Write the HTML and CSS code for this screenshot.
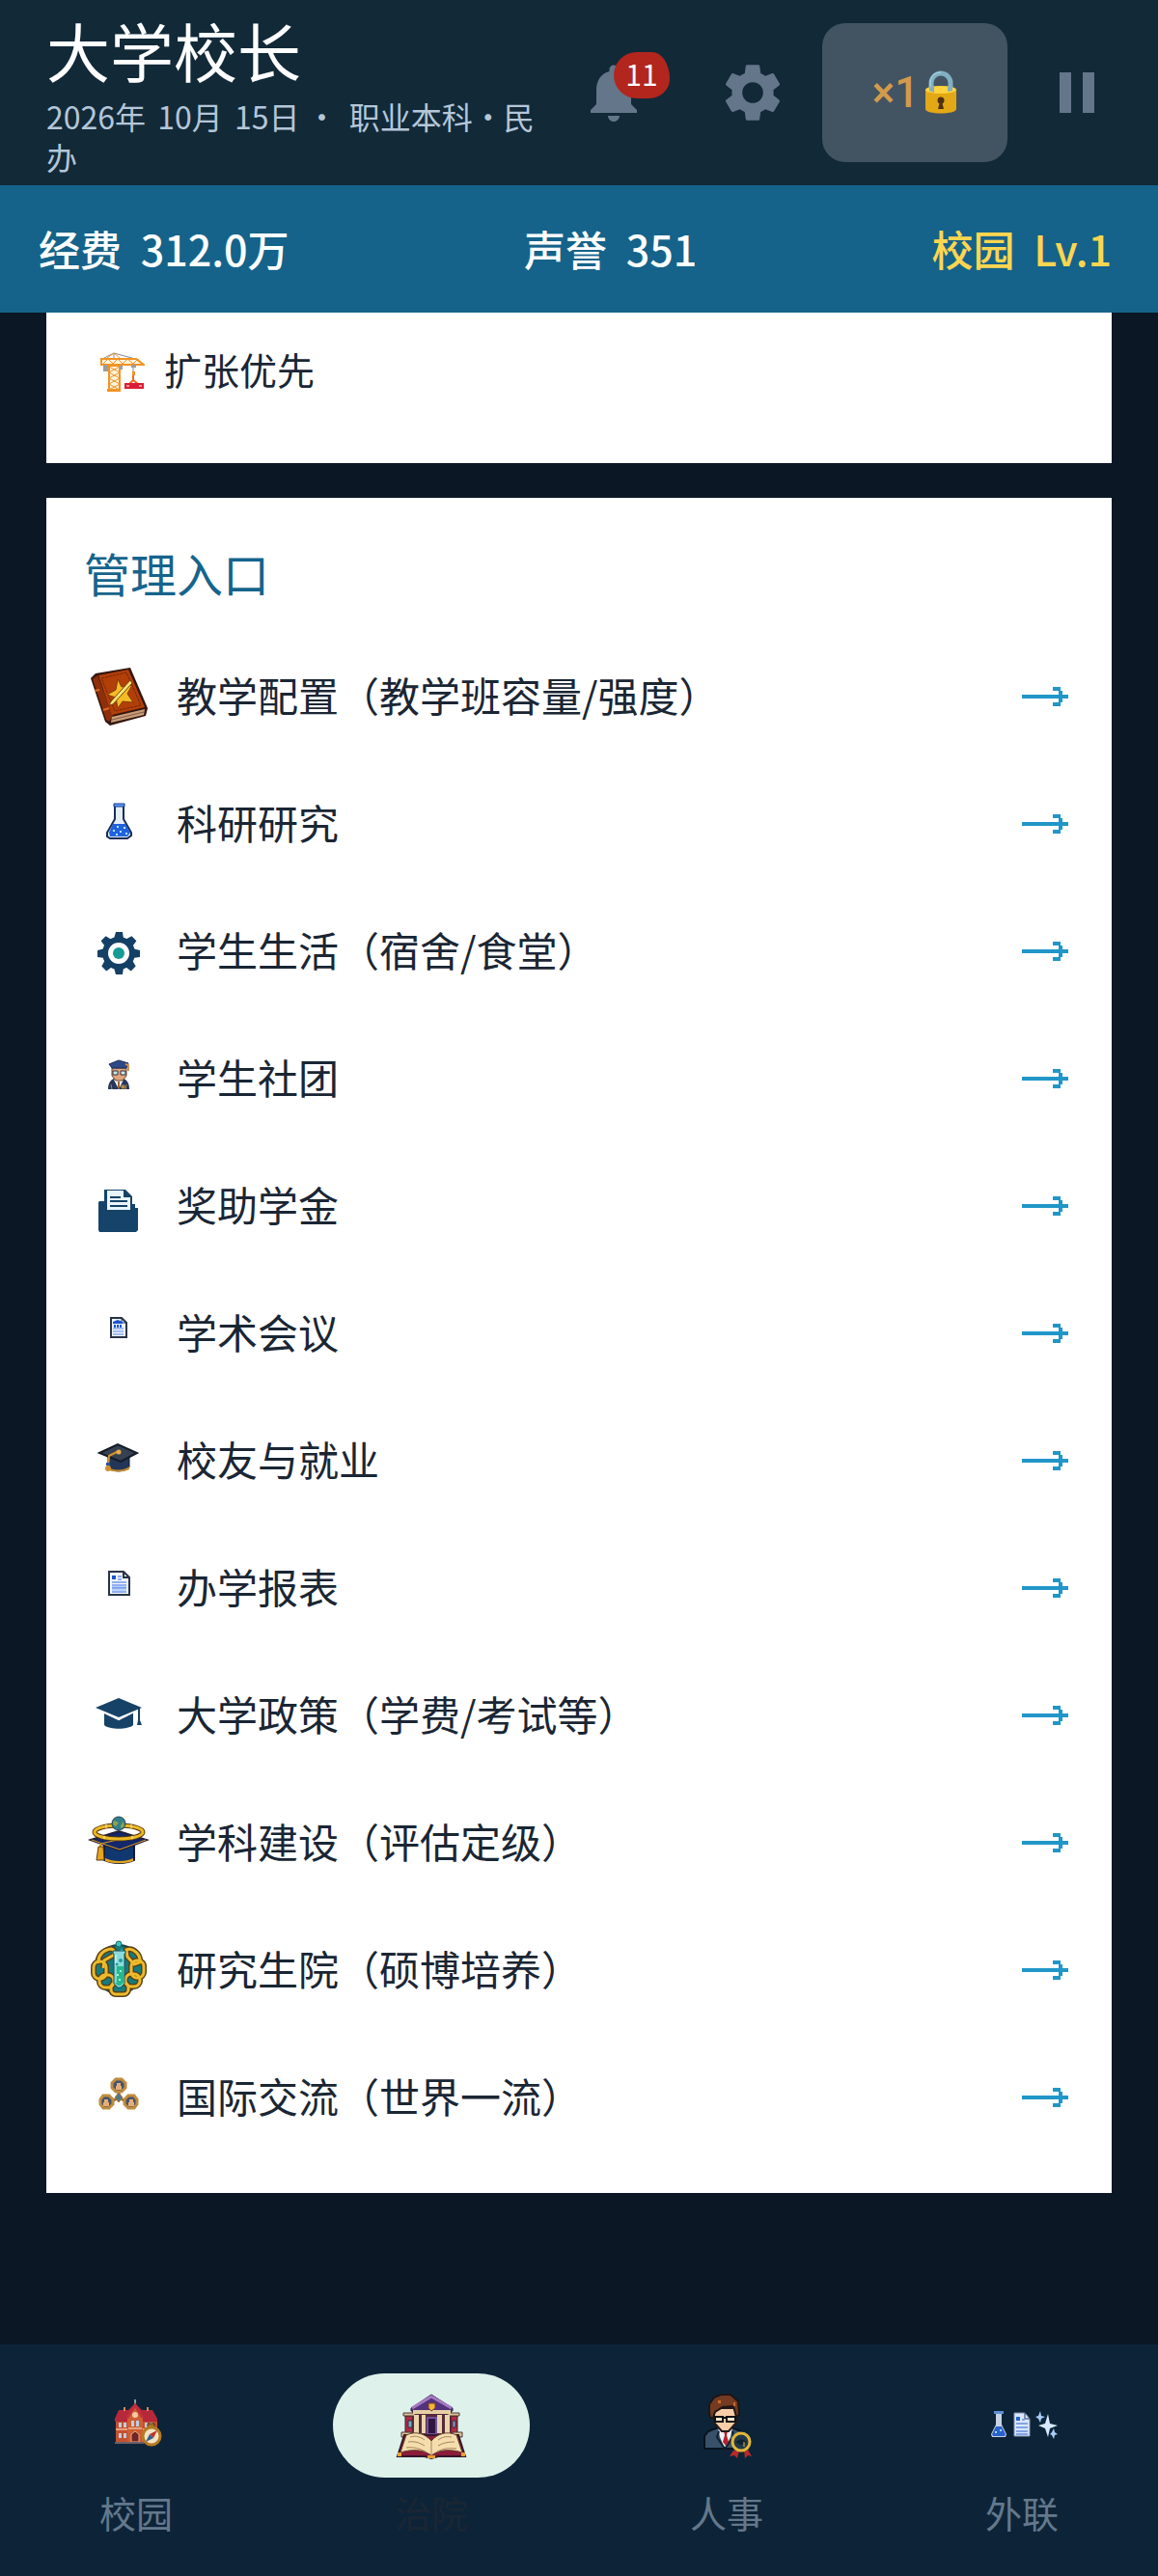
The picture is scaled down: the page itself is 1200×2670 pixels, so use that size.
FILE: index.html
```
<!doctype html>
<html lang="zh-CN">

<head>
    <meta charset="utf-8" />
    <meta name="viewport" content="width=device-width, initial-scale=1.0">
    <title>大学校长</title>
    <link rel="stylesheet" href="styles.css">
</head>

<body>

    <svg width="0" height="0" class="defs">
        <symbol id="arrow" viewBox="0 0 48 20"><path d="M0 8h38V4h-6V0h8v4h2v4h6v4h-6v4h-2v4h-8v-4h6v-4H0z" /></symbol>
    </svg>

    <header class="header">
        <div class="info">
            <h1 class="title">大学校长</h1>
            <div class="date">2026年 <span class="part">10月</span> <span class="part">15日</span> · <span class="part">职业本科</span>·民办</div>
        </div>
        <button class="icon-btn" aria-label="通知">
            <svg class="icon" viewBox="0 0 24 24"><path d="M12 22c1.100 0 2-.9 2-2h-4c0 1.100.9 2 2 2zm6-6v-5c0-3.070-1.640-5.640-4.500-6.320V4c0-.830-.670-1.500-1.500-1.500s-1.500.670-1.500 1.500v.680C7.630 5.360 6 7.920 6 11v5l-2 2v1h16v-1l-2-2z" /></svg>
            <span class="badge">11</span>
        </button>
        <button class="icon-btn" aria-label="设置">
            <svg class="icon" viewBox="0 0 24 24"><path d="M19.140 12.940c.040-.300.060-.610.060-.940 0-.320-.020-.640-.070-.940l2.030-1.580c.180-.140.230-.410.120-.610l-1.920-3.320c-.120-.220-.370-.290-.590-.220l-2.390.960c-.500-.380-1.030-.700-1.620-.940l-.360-2.540c-.040-.240-.240-.410-.480-.410h-3.840c-.240 0-.430.170-.470.410l-.360 2.540c-.590.240-1.130.570-1.620.940l-2.390-.960c-.220-.080-.470 0-.590.220L2.740 8.870c-.120.210-.080.470.120.610l2.030 1.580c-.050.300-.090.630-.090.940s.020.640.070.940l-2.030 1.580c-.180.140-.230.410-.120.610l1.920 3.320c.120.220.370.290.590.220l2.390-.960c.500.380 1.030.700 1.620.940l.360 2.540c.050.240.240.410.480.410h3.840c.240 0 .440-.170.470-.410l.360-2.540c.590-.240 1.130-.560 1.620-.940l2.390.960c.220.080.470 0 .590-.220l1.920-3.320c.120-.220.070-.470-.120-.610l-2.010-1.580zM12 15.600a3.600 3.600 0 1 1 0-7.200 3.600 3.600 0 0 1 0 7.200z" /></svg>
        </button>
        <button class="speed-btn">
            <span>×1</span>
            <svg class="lock" viewBox="0 0 34 46">
                <path d="M7 22V13a10 10 0 0 1 20 0v9" fill="none" stroke="#82afc2" stroke-width="5" />
                <path d="M6 20v-8C7 5 12 2 17 2" fill="none" stroke="#b7dce8" stroke-width="1" />
                <path d="M1 20v20c0 6 32 6 32 0V20z" fill="#e3a815" />
                <ellipse cx="17" cy="20" rx="16" ry="4" fill="#ffd43c" />
                <path d="M5 21v-4h5v6M24 22v-5h5v4" fill="#82afc2" />
                <circle cx="17" cy="31" r="3.500" fill="#4d3212" /><path d="M16 32h2l2 8h-6z" fill="#4d3212" />
            </svg>
        </button>
        <button class="icon-btn" aria-label="暂停">
            <svg class="icon" viewBox="0 0 24 24"><path d="M6 5h4v14H6zM14 5h4v14h-4z" /></svg>
        </button>
    </header>

    <div class="stats">
        <div>经费 <span class="part">312.0万</span></div>
        <div>声誉 <span class="part">351</span></div>
        <div class="level">校园 <span class="part">Lv.1</span></div>
    </div>

    <main class="main">

        <section class="card strategy">
            <a class="tag" href="#">
                <svg class="crane" viewBox="0 0 46 42">
                    <path d="M2 7L14 1l26 7M14 1v5M34 12v8" fill="none" stroke="#858b90" stroke-width="1" />
                    <path d="M1 7h36l8 6H1zM9 14h11v25H9z" fill="#fff4df" stroke="#f29423" stroke-width="2" />
                    <path d="M3 12l5-5 5 5 5-5 5 5 5-5 6 5 4-4M9 15l11 6-11 6 11 6-11 6M20 15L9 21l11 6-11 6 11 6M7 6l7-5 6 5" fill="none" stroke="#f29423" stroke-width="1" />
                    <path d="M3 13h5v7H3zM32 13h5v3h-5zM20 14h3v4h-3z" fill="#9a9c9f" />
                    <path d="M7 38h14v3H7zM33 20h3v4h-3z" fill="#f29423" />
                    <path d="M34 24v5m0 0l-4 4m4-4l5 4" fill="none" stroke="#f06a24" stroke-width="2" />
                    <path d="M25 32h20v6H25z" fill="#d91e38" /><path d="M27 34h3v2h-3zM40 34h3v2h-3z" fill="#ff8fa0" />
                </svg>
                <span>扩张优先</span>
            </a>
        </section>

        <section class="card">
            <h2 class="card-title">管理入口</h2>
            <ul class="menu">
                <li><a class="row" href="#">
                    <svg class="row-icon" viewBox="0 0 60 60">
                        <path d="M1 11l5-5L42 0l18 42-2 8-37 10-5-4z" fill="#35160f" />
                        <path d="M3 12l5-4 16 42-4 6-3-2z" fill="#8e2f0b" />
                        <path d="M9 8l31-6 17 39-34 8z" fill="#b23f08" />
                        <path d="M23 51l34-8-1 6-34 8z" fill="#c89c78" /><path d="M23 54l33-8" stroke="#805b46" />
                        <path d="M12 11l26-6 15 34-27 6z" fill="none" stroke="#722608" stroke-dasharray="3 1" />
                        <path d="M5 24l5-1M14 44l6-2" stroke="#df6a20" stroke-width="2" />
                        <path d="M29 12l4 8 11-2-5 9 6 9-11-1-5 7-2-11-9-3 9-5z" fill="#f4bb25" stroke="#803d0a" />
                        <path d="M22 35L42 13l2 3-20 22-4 1z" fill="#ffe375" stroke="#724010" />
                    </svg>
                    <span class="label">教学配置（教学班容量/强度）</span>
                    <svg class="arrow"><use href="#arrow" /></svg>
                </a></li>
                <li><a class="row" href="#">
                    <svg class="row-icon" viewBox="0 0 60 60">
                        <path d="M26 11v14l-8 14v4l3 2h18l4-3v-3l-8-14V11z" fill="#e4edf8" stroke="#182d55" stroke-width="2" />
                        <path d="M25 9h11v3H25z" fill="#5b9cf4" stroke="#153a91" />
                        <path d="M24 30h13l5 9-3 4H21l-1-4z" fill="#1f62de" />
                        <path d="M24 36h2v2h-2zM28 32h2v2h-2zM31 37h2v2h-2zM35 33h2v2h-2zM27 40h2v2h-2zM37 39h2v2h-2z" fill="#b9e4ff" />
                    </svg>
                    <span class="label">科研研究</span>
                    <svg class="arrow"><use href="#arrow" /></svg>
                </a></li>
                <li><a class="row" href="#">
                    <svg class="row-icon" viewBox="0 0 60 60">
                        <g fill="#154066">
                            <circle cx="30" cy="32" r="17" />
                            <path d="M27 10h7l1 7-5 3-5-3zM27 54h7l1-7-5-3-5 3zM8 29v7l8 1 3-5-3-5zM52 29v7l-8 1-3-5 3-5z" />
                            <path d="M27 10h7l1 7-5 3-5-3zM27 54h7l1-7-5-3-5 3zM8 29v7l8 1 3-5-3-5zM52 29v7l-8 1-3-5 3-5z" transform="rotate(45 30 32)" />
                        </g>
                        <circle cx="30" cy="32" r="11" fill="#fff" /><circle cx="30" cy="32" r="6" fill="#169b96" />
                    </svg>
                    <span class="label">学生生活（宿舍/食堂）</span>
                    <svg class="arrow"><use href="#arrow" /></svg>
                </a></li>
                <li><a class="row" href="#">
                    <svg class="row-icon" viewBox="0 0 60 60">
                        <path d="M19 41c0-8 4-12 11-12s11 4 11 12z" fill="#25385d" />
                        <path d="M25 31h10l-5 10z" fill="#fff" /><path d="M29 33h2v7h-2z" fill="#9e6430" />
                        <path d="M23 41l-1-5M37 41l1-5M33 37h3v3h-3z" stroke="#b88941" fill="#b88941" />
                        <path d="M23 19h15v8l-4 5h-7l-4-5z" fill="#e0a67c" stroke="#664232" />
                        <path d="M20 15l10-4 10 3-2 5H23z" fill="#2f4886" stroke="#182c60" />
                        <path d="M24 22h5v4h-5zM32 22h5v4h-5z" fill="#cce6ef" stroke="#303542" />
                        <path d="M37 15l3 1v6" fill="none" stroke="#c7984d" stroke-width="2" />
                    </svg>
                    <span class="label">学生社团</span>
                    <svg class="arrow"><use href="#arrow" /></svg>
                </a></li>
                <li><a class="row" href="#">
                    <svg class="row-icon" viewBox="0 0 60 60">
                        <path d="M10 25h5V13h22l7 7v8h3v4h3v23l-2 2H10l-1-2V26z" fill="#154369" />
                        <path d="M18 14h17v7h7v13H18z" fill="#e9f5fb" />
                        <path d="M21 21h11M21 25h18M21 30h18" stroke="#154369" stroke-width="2" />
                    </svg>
                    <span class="label">奖助学金</span>
                    <svg class="arrow"><use href="#arrow" /></svg>
                </a></li>
                <li><a class="row" href="#">
                    <svg class="row-icon" viewBox="0 0 60 60">
                        <path d="M22 14h11l5 5v15H22z" fill="#edf3ff" stroke="#293347" stroke-width="2" />
                        <path d="M33 14v5h5" fill="none" stroke="#293347" />
                        <path d="M24 20v-2l5-2 5 2v2zM25 21h2v3h-2zM28 21h2v3h-2zM31 21h2v3h-2z" fill="#1c55ce" />
                        <path d="M24 25h11M24 28h11M24 31h11" stroke="#5685db" />
                    </svg>
                    <span class="label">学术会议</span>
                    <svg class="arrow"><use href="#arrow" /></svg>
                </a></li>
                <li><a class="row" href="#">
                    <svg class="row-icon" viewBox="0 0 60 60">
                        <path d="M19 25v13c5 4 18 4 22-1V24z" fill="#233658" stroke="#111c2e" />
                        <path d="M20 37c6 4 17 3 21-1v3c-5 3-15 3-21 1z" fill="#c58b2e" />
                        <path d="M10 22l19-9 20 9-17 9z" fill="#374052" stroke="#131b28" stroke-width="2" />
                        <path d="M30 20l-10 5-1 12" fill="none" stroke="#d4912d" stroke-width="2" />
                        <circle cx="30" cy="21" r="2.500" fill="#e8ac44" /><path d="M17 32h4v3h-4z" fill="#21569b" /><circle cx="19" cy="38" r="3" fill="#d28d29" />
                    </svg>
                    <span class="label">校友与就业</span>
                    <svg class="arrow"><use href="#arrow" /></svg>
                </a></li>
                <li><a class="row" href="#">
                    <svg class="row-icon" viewBox="0 0 60 60">
                        <path d="M20 13h15l6 6v18H20z" fill="#f3f7ff" stroke="#293347" stroke-width="2" />
                        <path d="M35 13v6h6" fill="none" stroke="#293347" stroke-width="2" />
                        <path d="M23 28h15v2H23zM23 31h15v2H23z" fill="#bad1ff" />
                        <path d="M23 17h4v4h-4z" fill="#1c55ce" />
                        <path d="M29 18h4M29 21h4M23 24h15M23 27h15M23 30h15M23 34h15" stroke="#2d69df" />
                    </svg>
                    <span class="label">办学报表</span>
                    <svg class="arrow"><use href="#arrow" /></svg>
                </a></li>
                <li><a class="row" href="#">
                    <svg class="row-icon" viewBox="0 0 60 60">
                        <path d="M15 26l15 8 15-8v14c-5 5-25 5-30 0z" fill="#164267" />
                        <path d="M13 25l17 8 16-8" fill="none" stroke="#fff" stroke-width="4" />
                        <path d="M6 22l24-10 24 10-24 10z" fill="#164267" />
                        <path d="M51 23v14" stroke="#164267" stroke-width="2" /><path d="M50 35h2l2 5h-5z" fill="#164267" />
                    </svg>
                    <span class="label">大学政策（学费/考试等）</span>
                    <svg class="arrow"><use href="#arrow" /></svg>
                </a></li>
                <li><a class="row" href="#">
                    <svg class="row-icon" viewBox="0 0 60 60">
                        <path d="M15 31v17c7 4 24 4 31 0V31z" fill="#10376f" stroke="#121b32" stroke-width="2" />
                        <path d="M16 46c8 4 22 4 29 0v3c-8 3-21 3-29 0z" fill="#e4a51c" />
                        <path d="M1 27l29-9 29 9-28 11z" fill="#13276c" stroke="#212039" stroke-width="2" />
                        <path d="M2 27l29 10 27-10M29 27l-18 4" fill="none" stroke="#d99d25" />
                        <ellipse cx="30" cy="19" rx="25" ry="7" fill="none" stroke="#593a0b" stroke-width="5" />
                        <ellipse cx="30" cy="19" rx="25" ry="7" fill="none" stroke="#edb823" stroke-width="3" />
                        <circle cx="30" cy="10" r="7" fill="#347f8a" stroke="#284254" />
                        <path d="M25 7l5 2-3 4-3-2zM32 12l3-4 1 5-4 2z" fill="#8aa551" />
                        <path d="M17 11v4M43 11v4M15 23v3M44 23v3M25 3l-3 2M37 4l3-2" stroke="#fff0ae" />
                        <path d="M11 31v5" stroke="#d99d25" stroke-width="2" /><path d="M9 34h5l1 14H7z" fill="#e5a51f" stroke="#5c3b0e" />
                    </svg>
                    <span class="label">学科建设（评估定级）</span>
                    <svg class="arrow"><use href="#arrow" /></svg>
                </a></li>
                <li><a class="row" href="#">
                    <svg class="row-icon" viewBox="0 0 60 60">
                        <circle cx="30" cy="29" r="25" fill="#147b80" stroke="#194248" stroke-width="2" />
                        <g fill="none" stroke="#594216" stroke-width="6">
                            <path d="M9 23c-1-8 5-14 13-15 5 1 4 7 0 8l-7 4-1 8M38 9c7-3 15 5 14 13l-6 2-7-8z" />
                            <rect x="4" y="21" width="13" height="18" rx="6" /><rect x="43" y="20" width="13" height="18" rx="6" />
                            <rect x="10" y="35" width="15" height="13" rx="6" /><rect x="37" y="34" width="15" height="13" rx="6" /><rect x="22" y="43" width="18" height="12" rx="5" />
                        </g>
                        <g fill="none" stroke="#edba2c" stroke-width="3">
                            <path d="M9 23c-1-8 5-14 13-15 5 1 4 7 0 8l-7 4-1 8M38 9c7-3 15 5 14 13l-6 2-7-8z" />
                            <rect x="4" y="21" width="13" height="18" rx="6" /><rect x="43" y="20" width="13" height="18" rx="6" />
                            <rect x="10" y="35" width="15" height="13" rx="6" /><rect x="37" y="34" width="15" height="13" rx="6" /><rect x="22" y="43" width="18" height="12" rx="5" />
                        </g>
                        <path d="M24 10h13v3h-1v31l-4 4h-3l-4-4V13h-1z" fill="#8cdbdc" stroke="#164d58" />
                        <path d="M26 26h9v17l-3 3h-3l-3-3z" fill="#24b98f" /><path d="M27 14v29" stroke="#dafcff" />
                        <circle cx="30" cy="3" r="3" fill="#3bc5bc" stroke="#146a6c" /><circle cx="32" cy="20" r="2" fill="#1d9e97" /><circle cx="28" cy="24" r="1.500" fill="#1d9e97" /><circle cx="33" cy="9" r="1.500" fill="#1d9e97" />
                        <path d="M28 34h2v2h-2zM31 30h2v2h-2zM30 39h2v2h-2z" fill="#a4f6d0" />
                    </svg>
                    <span class="label">研究生院（硕博培养）</span>
                    <svg class="arrow"><use href="#arrow" /></svg>
                </a></li>
                <li><a class="row" href="#">
                    <svg class="row-icon" viewBox="0 0 60 60">
                        <path d="M30 18v12L19 36M30 30l11 6" fill="none" stroke="#9b6b31" stroke-width="3" />
                        <g fill="#45546a" stroke="#c18b3e" stroke-width="3">
                            <path d="M27 11h6l4 4v5l-4 4h-6l-4-4v-5z" /><path d="M14 28h6l4 4v5l-4 4h-6l-3-4v-5z" /><path d="M40 28h6l3 4v5l-3 4h-6l-4-4v-5z" />
                        </g>
                        <path d="M30 25l4 5-4 5-4-5z" fill="#507688" stroke="#b27a32" />
                        <path d="M28 15h4v3h1v4h-6v-4h1zM15 32h4v3h1v4h-6v-4h1zM41 32h4v3h1v4h-6v-4h1z" fill="#e5ad78" />
                    </svg>
                    <span class="label">国际交流（世界一流）</span>
                    <svg class="arrow"><use href="#arrow" /></svg>
                </a></li>
            </ul>
        </section>

    </main>

    <nav class="nav">
        <a class="nav-item" href="#">
            <span class="pill">
                <svg class="nav-icon" viewBox="0 0 72 72">
                    <path d="M15 30h43v23H15z" fill="#c3512f" />
                    <path d="M14 29l4-9h10l7-7 7 7h11l5 9v3H14z" fill="#b7283a" />
                    <path d="M35 9v9M35 11h1" stroke="#8b98a6" stroke-width="2" />
                    <path d="M27 28l8-13 8 13v25H27z" fill="#cf5e35" /><path d="M27 28l8-13 8 13" fill="none" stroke="#c2303b" stroke-width="3" />
                    <circle cx="35" cy="25" r="3" fill="#f2cb9d" />
                    <path d="M23 17h2v4h-2zM47 17h2v4h-2z" fill="#dc8265" />
                    <path d="M18 33h3v5h-3zM23 33h3v5h-3zM31 31h3v6h-3zM36 31h3v6h-3zM45 33h3v5h-3zM50 33h3v5h-3zM18 44h3v5h-3zM23 44h3v5h-3zM45 44h3v5h-3z" fill="#bfcde0" />
                    <path d="M15 40h12M43 40h13M28 39h14" stroke="#e5a17c" stroke-width="2" />
                    <path d="M31 53v-8l4-3 4 3v8z" fill="#6e2428" stroke="#efaa74" /><path d="M14 53h30v2H14z" fill="#67606a" />
                    <path d="M48 34h7v5h-7z" fill="#a57428" stroke="#573913" />
                    <circle cx="52" cy="47" r="9" fill="#f4e3c0" stroke="#b47b25" stroke-width="3" />
                    <path d="M58 41l-4 8-4-4z" fill="#bd322d" /><path d="M46 53l4-8 4 4z" fill="#315f8d" />
                </svg>
            </span>
            <span class="nav-label">校园</span>
        </a>
        <a class="nav-item active" href="#">
            <span class="pill">
                <svg class="nav-icon" viewBox="0 0 72 72">
                    <path d="M9 26h54v22H9z" fill="#b02b42" stroke="#35202e" /><path d="M16 20h41v28H16z" fill="#542a3b" />
                    <path d="M7 23h12v3H7zM53 23h12v3H53zM5 43h10v5H5zM58 43h10v5H58z" fill="#dfc398" stroke="#4a3839" />
                    <path d="M15 18L36 4l22 14v3H15z" fill="#54327d" stroke="#2b1c3c" /><path d="M16 18L36 6l21 12" fill="none" stroke="#a67ac2" stroke-width="3" />
                    <path d="M17 20h39v4H17z" fill="#e6cfa4" /><path d="M33 13h7v5l-4 3-3-3z" fill="#f3b33c" stroke="#754225" />
                    <path d="M18 25h5v19h-5zM26 25h4v19h-4zM42 25h5v19h-5zM50 25h5v19h-5z" fill="#ead4ac" />
                    <path d="M32 28h9v17h-9z" fill="#2e173d" stroke="#7350a0" stroke-width="2" />
                    <path d="M12 31h4v7h-4zM58 31h3v7h-3z" fill="#77a8cd" stroke="#402638" />
                    <path d="M8 46l-7 22h28l7 2 7-2h28l-7-22z" fill="#8b1c3a" stroke="#35182a" stroke-width="2" />
                    <path d="M10 46c10-5 20-1 26 6 6-7 16-11 26-6l6 18c-13-4-24-3-32 3-8-6-19-7-32-3z" fill="#f4deae" stroke="#6c4834" />
                    <path d="M36 52v15M14 48c6-2 11 0 15 3M12 53c7-1 12 1 17 4M10 59c8-1 14 1 20 4M43 51c4-3 8-4 14-3M43 57c5-3 10-4 17-4M42 63c6-3 12-4 20-3" fill="none" stroke="#aa835a" />
                    <path d="M1 64h4v4H1zM67 64h4v4h-4zM32 67h8v3h-8z" fill="#e2a036" />
                </svg>
            </span>
            <span class="nav-label">治院</span>
        </a>
        <a class="nav-item" href="#">
            <span class="pill">
                <svg class="nav-icon" viewBox="0 0 72 72">
                    <path d="M13 60V47l4-5 13-5h8l13 5 4 5v13z" fill="#38516a" stroke="#07131d" stroke-width="2" />
                    <path d="M27 38h15l-2 10-6 12-5-12z" fill="#eff4f5" /><path d="M33 42h4l-1 4 2 7-3 4-3-4 2-7z" fill="#b81f2b" />
                    <path d="M28 42l-2 6 8 12M42 42l1 6-9 12" fill="none" stroke="#10202f" stroke-width="2" />
                    <path d="M22 18h24v15l-8 9h-7l-8-9z" fill="#f9cda6" stroke="#241a1b" stroke-width="2" />
                    <path d="M18 23V14l5-7 7-3h10l8 7 1 14-3 2-3-11-11 1-8 5-2 6h-3z" fill="#743a22" stroke="#1d1615" stroke-width="2" />
                    <path d="M27 10h3v3h-3zM43 12h2v4h-2z" fill="#c76b30" />
                    <path d="M24 27h8v5h-8zM36 27h9v5h-9zM32 28h4" fill="#f9e4cd" stroke="#111" stroke-width="2" />
                    <path d="M43 62l-4 6 5-1 3 3 2-8M54 62l1 8 3-3 4 1-4-7" fill="#b62a28" />
                    <circle cx="51" cy="53" r="9" fill="#20384a" stroke="#e2b63a" stroke-width="3" />
                    <path d="M45 53l6-3 6 3-6 3z" fill="#10202f" /><path d="M54 53v5" stroke="#e2b63a" />
                </svg>
            </span>
            <span class="nav-label">人事</span>
        </a>
        <a class="nav-item" href="#">
            <span class="pill">
                <svg class="nav-icon" viewBox="0 0 72 72">
                    <path d="M9 23v12L4 45l1 3h14l1-3-5-10V23z" fill="#c7d2e4" /><path d="M7 21h10v3H7z" fill="#5e8ed2" />
                    <path d="M9 37h6l4 8-1 2H6l-1-2z" fill="#2862cf" /><path d="M8 42h2v2H8zM13 40h2v2h-2z" fill="#a9d8f7" />
                    <path d="M28 23h11l5 6v18H28z" fill="#dce7fb" stroke="#8494b0" /><path d="M39 23v6h5" fill="none" stroke="#273d67" />
                    <path d="M30 27h4v4h-4z" fill="#2862cf" /><path d="M36 30h3M30 34h12M30 38h12M30 42h12M30 45h12" stroke="#2862cf" />
                    <path d="M63 24l2 10 8 2-8 3-2 9-3-9-7-3 7-2z" fill="#d8e8ff" /><path d="M55 21l1 5 4 1-4 2-1 4-2-4-3-2 3-1zM69 39l1 4 3 2-3 1-1 4-2-4-2-1 2-2z" fill="#a9ccf7" />
                </svg>
            </span>
            <span class="nav-label">外联</span>
        </a>
    </nav>

</body>

</html>
```
FILE: styles.css
```
html,
body {
    margin: 0;
    font-family: "Noto Sans CJK SC", sans-serif;
}

body {
    display: flex;
    flex-direction: column;
    min-height: 100vh;
    background-color: #0b1724;
}

button {
    font-family: inherit;
    border: 0;
    padding: 0;
    background: none;
}

a {
    color: inherit;
    text-decoration: none;
}

.defs {
    position: absolute;
}

.header {
    display: flex;
    align-items: center;
    min-height: 192px;
    padding: 0 12px 0 48px;
    box-sizing: border-box;
    background-color: #122938;
}

.header .info {
    flex: 1;
    min-width: 0;
}

.header .title {
    margin: 0 0 6px;
    font-size: 66px;
    line-height: 84px;
    font-weight: 400;
    color: white;
}

.header .date {
    font-size: 32px;
    line-height: 42px;
    color: #b4c6d8;
}

.header .date .part {
    margin-left: 5px;
}

.icon-btn {
    position: relative;
    display: flex;
    flex: none;
    justify-content: center;
    align-items: center;
    width: 144px;
    height: 144px;
}

.icon {
    width: 72px;
    height: 72px;
    fill: #64768a;
}

.badge {
    position: absolute;
    top: 30px;
    left: 72px;
    width: 58px;
    height: 48px;
    border-radius: 24px 18px 22px 24px / 24px 28px 20px 24px;
    font-size: 30px;
    line-height: 44px;
    color: white;
    background-color: #b3261e;
}

.speed-btn {
    display: flex;
    flex: none;
    justify-content: center;
    align-items: center;
    gap: 6px;
    width: 192px;
    height: 144px;
    border-radius: 24px;
    font-family: Roboto, "Noto Sans CJK SC", sans-serif;
    font-size: 44px;
    font-weight: 500;
    color: #d29b4b;
    background-color: #425462;
}

.lock {
    width: 34px;
    height: 46px;
}

.stats {
    display: flex;
    justify-content: space-between;
    padding: 32px 48px 34px 40px;
    font-size: 43px;
    line-height: 66px;
    font-weight: 500;
    color: white;
    background-color: #15638a;
}

.stats .part {
    margin-left: 10px;
}

.stats .level {
    color: #ffd54f;
}

.main {
    flex: 1;
    padding: 0 48px 36px;
}

.card {
    margin-bottom: 36px;
    padding: 33px 39px;
    color: #1a2634;
    background-color: white;
}

.strategy {
    padding: 32px 56px 64px;
}

.tag {
    display: flex;
    align-items: center;
    gap: 20px;
    font-size: 39px;
    line-height: 60px;
}

.tag span {
    margin-top: -4px;
    margin-bottom: 4px;
}

.crane {
    width: 46px;
    height: 42px;
}

.card-title {
    margin: 0 0 19px;
    font-size: 48px;
    line-height: 88px;
    font-weight: 400;
    color: #15648c;
}

.menu {
    margin: 0;
    padding: 0;
    list-style: none;
}

.row {
    display: flex;
    align-items: center;
    height: 132px;
    padding: 0 6px;
    font-size: 42px;
}

.row-icon {
    width: 60px;
    height: 60px;
    margin-right: 30px;
    overflow: visible;
}

.row .label {
    flex: 1;
    padding-bottom: 6px;
}

.arrow {
    width: 48px;
    height: 20px;
    fill: #2196c8;
}

.nav {
    display: flex;
    gap: 24px;
    padding: 30px 0 39px;
    background-color: #0d2438;
}

.nav-item {
    display: flex;
    flex: 1;
    flex-direction: column;
    align-items: center;
    gap: 9px;
    color: #64788c;
}

.pill {
    display: flex;
    justify-content: center;
    align-items: center;
    width: 204px;
    height: 108px;
    border-radius: 54px;
}

.nav-icon {
    width: 72px;
    height: 72px;
    overflow: visible;
}

.nav-label {
    font-size: 38px;
    line-height: 54px;
}

.nav-item.active {
    color: #1a2634;
}

.nav-item.active .pill {
    background-color: #def2eb;
}
```
